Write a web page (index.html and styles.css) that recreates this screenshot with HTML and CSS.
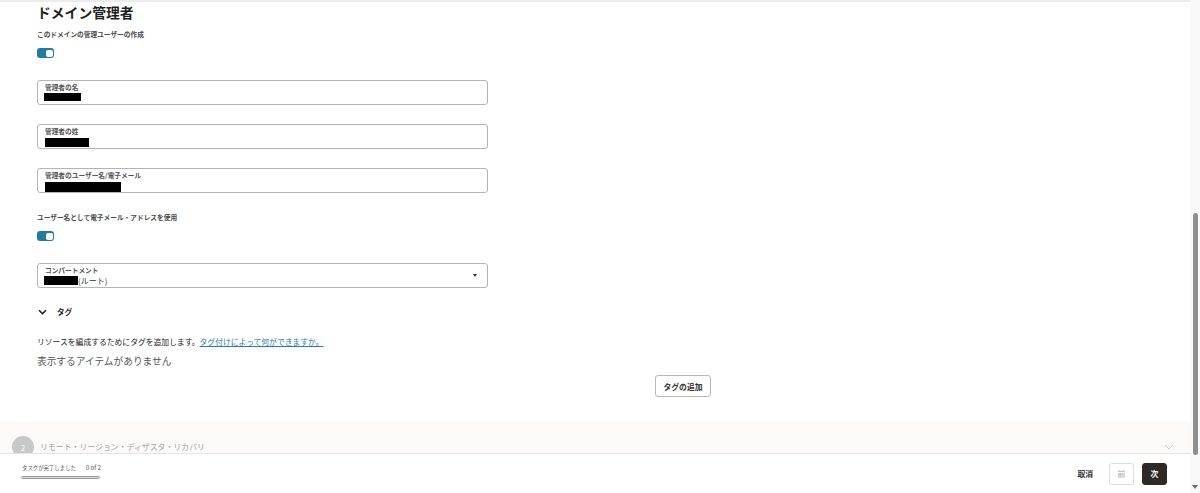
FILE: index.html
```html
<!DOCTYPE html>
<html lang="ja">
<head>
  <meta charset="UTF-8" />
  <title>ドメイン管理者</title>
  <meta name="viewport" content="width=device-width, initial-scale=1.0" />
  <link rel="stylesheet" href="styles.css">
</head>
<body>
  <div class="window">
    <div class="page">
      <main class="content">
        <h1 class="title">ドメイン管理者</h1>

        <div class="field-label">このドメインの管理ユーザーの作成</div>
        <span class="toggle"><span class="knob"></span></span>

        <div class="input first">
          <span class="input-label">管理者の名</span>
          <span class="redacted r1"></span>
        </div>

        <div class="input">
          <span class="input-label">管理者の姓</span>
          <span class="redacted r2"></span>
        </div>

        <div class="input">
          <span class="input-label">管理者のユーザー名/電子メール</span>
          <span class="redacted r3"></span>
        </div>

        <div class="field-label spaced">ユーザー名として電子メール・アドレスを使用</div>
        <span class="toggle"><span class="knob"></span></span>

        <div class="input select">
          <div class="select-body">
            <span class="input-label">コンパートメント</span>
            <span class="select-value"><span class="redacted r4"></span>(ルート)</span>
          </div>
          <span class="caret"></span>
        </div>

        <div class="section-toggle">
          <svg width="9" height="6" viewBox="0 0 9 6"><path d="M1 1.2 L4.5 4.6 L8 1.2" fill="none" stroke="#222" stroke-width="1.6"/></svg>
          <span>タグ</span>
        </div>

        <p class="desc">リソースを編成するためにタグを追加します。<a href="#">タグ付けによって何ができますか。</a></p>
        <p class="empty">表示するアイテムがありません</p>

        <button class="btn add-tag">タグの追加</button>
      </main>

      <div class="step">
        <span class="step-num">2</span>
        <span class="step-title">リモート・リージョン・ディザスタ・リカバリ</span>
        <svg class="step-chevron" width="10" height="6" viewBox="0 0 10 6"><path d="M1 1 L5 5 L9 1" fill="none" stroke="#cfcfcf" stroke-width="1"/></svg>
      </div>

      <footer class="footer">
        <div class="progress">
          <span class="progress-text">タスクが完了しました<span class="count">0 of 2</span></span>
          <span class="progress-bar"></span>
        </div>
        <div class="actions">
          <button class="link-btn">取消</button>
          <button class="btn prev">前</button>
          <button class="btn next">次</button>
        </div>
      </footer>
    </div>

    <div class="scrollbar">
      <div class="thumb"></div>
      <div class="arrow"></div>
    </div>
  </div>
</body>
</html>
```

FILE: styles.css
```css
body {
  margin: 0;
  font-family: "Noto Sans CJK JP", "Noto Sans", sans-serif;
  color: #222;
  background: #fff;
  overflow: hidden;
}

.window {
  display: flex;
  height: 493px;
}

.page {
  flex: 1;
  display: flex;
  flex-direction: column;
}

.content {
  flex: 1;
  display: flex;
  flex-direction: column;
  align-items: flex-start;
  padding-left: 37px;
  border-top: 2px solid #ececec;
  overflow: hidden;
}

.title {
  margin: 0;
  font-size: 13.8px;
  line-height: 20px;
  font-weight: bold;
  color: #1f1f1f;
}

.field-label {
  margin-top: 7px;
  font-size: 6.7px;
  line-height: 10px;
  font-weight: bold;
  color: #4a4a4a;
}

.field-label.spaced {
  margin-top: 19px;
}

.toggle {
  display: flex;
  justify-content: flex-end;
  margin-top: 9px;
  width: 17px;
  height: 10px;
  box-sizing: border-box;
  padding: 1.5px;
  border-radius: 3px;
  background: #237c9e;
}

.knob {
  width: 7px;
  height: 7px;
  border-radius: 2px;
  background: #fff;
}

.input {
  display: flex;
  flex-direction: column;
  align-items: flex-start;
  box-sizing: border-box;
  width: 451px;
  height: 25px;
  margin-top: 19px;
  padding: 2px 7px 0;
  border: 1px solid #b4b4b4;
  border-radius: 3px;
}

.input.first,
.input.select {
  margin-top: 22px;
}

.input-label {
  font-size: 6.7px;
  line-height: 9px;
  font-weight: bold;
  color: #555;
}

.redacted {
  display: inline-block;
  background: #000;
}

.r1 { width: 37px; height: 8px; margin-top: 1px; margin-left: -1px; }
.r2 { width: 44px; height: 9px; margin-top: 2px; }
.r3 { width: 76px; height: 11px; margin-top: 2px; }
.r4 { width: 34px; height: 9px; margin-left: -1px; }

.select {
  flex-direction: row;
  align-items: center;
  justify-content: space-between;
  padding-right: 10px;
}

.select-body {
  display: flex;
  flex-direction: column;
  align-self: flex-start;
}

.select-value {
  display: flex;
  align-items: center;
  font-size: 8px;
  line-height: 11px;
  color: #333;
}

.caret {
  width: 0;
  height: 0;
  margin-top: -3px;
  border-left: 2.5px solid transparent;
  border-right: 2.5px solid transparent;
  border-top: 3px solid #333;
}

.section-toggle {
  display: flex;
  align-items: center;
  gap: 10px;
  margin-top: 18px;
  margin-left: 1px;
  font-size: 7.6px;
  line-height: 12px;
  font-weight: bold;
}

.desc {
  margin: 18px 0 0;
  font-size: 7.8px;
  line-height: 12px;
  color: #222;
}

.desc a {
  color: #2a7ea6;
  text-decoration: underline;
}

.empty {
  margin: 6px 0 0;
  font-size: 9.7px;
  line-height: 14px;
  color: #555;
}

.btn {
  box-sizing: border-box;
  font-family: inherit;
  background: #fff;
  border: 1px solid #b8b8b8;
  border-radius: 3px;
  cursor: pointer;
}

.add-tag {
  margin-top: 7px;
  margin-left: 618px;
  width: 56px;
  height: 22px;
  padding: 0;
  font-size: 7.8px;
  font-weight: bold;
  color: #333;
}

.step {
  display: flex;
  height: 32px;
  box-sizing: border-box;
  padding: 15px 16px 0 12px;
  align-items: flex-start;
  background: #fbfaf9;
  overflow: hidden;
}

.step-num {
  display: flex;
  align-items: center;
  justify-content: center;
  width: 22px;
  height: 22px;
  flex-shrink: 0;
  border-radius: 50%;
  background: #c8c8c8;
  color: #fff;
  font-size: 8px;
}

.step-title {
  margin-left: 6px;
  font-size: 7.9px;
  line-height: 22px;
  color: #a3a3a3;
}

.step-chevron {
  margin-left: auto;
  margin-top: 8px;
}

.footer {
  display: flex;
  align-items: center;
  justify-content: space-between;
  height: 40px;
  box-sizing: border-box;
  padding: 0 23px 0 21px;
  border-top: 1px solid #e6e6e6;
  background: #fff;
}

.progress {
  display: flex;
  flex-direction: column;
  gap: 4px;
  margin-top: -4px;
}

.progress-text {
  font-size: 5.4px;
  line-height: 8px;
  color: #555;
  padding-left: 1px;
}

.count {
  margin-left: 10px;
  font-size: 6px;
}

.progress-bar {
  width: 79px;
  height: 3px;
  box-sizing: border-box;
  border: 1px solid #9a9a9a;
  border-radius: 2px;
  background: #dcdcdc;
}

.actions {
  display: flex;
  align-items: center;
}

.link-btn {
  margin-right: 16px;
  padding: 0;
  border: none;
  background: none;
  font-family: inherit;
  font-size: 7.8px;
  font-weight: bold;
  color: #333;
}

.prev,
.next {
  width: 25px;
  height: 22px;
  padding: 0;
  font-size: 7.8px;
  font-weight: bold;
}

.prev {
  border-color: #dedede;
  color: #c0c0c0;
  margin-right: 8px;
}

.next {
  border-color: #2d2926;
  background: #2d2926;
  color: #fff;
}

.scrollbar {
  display: flex;
  flex-direction: column;
  align-items: center;
  width: 10px;
  background: #f9f9f9;
}

.thumb {
  width: 5px;
  height: 242px;
  margin-top: 213px;
  border-radius: 3px;
  background: #8f8f8f;
}

.arrow {
  margin-top: auto;
  margin-bottom: 4px;
  width: 0;
  height: 0;
  border-left: 3px solid transparent;
  border-right: 3px solid transparent;
  border-top: 4px solid #6e6e6e;
}
```
